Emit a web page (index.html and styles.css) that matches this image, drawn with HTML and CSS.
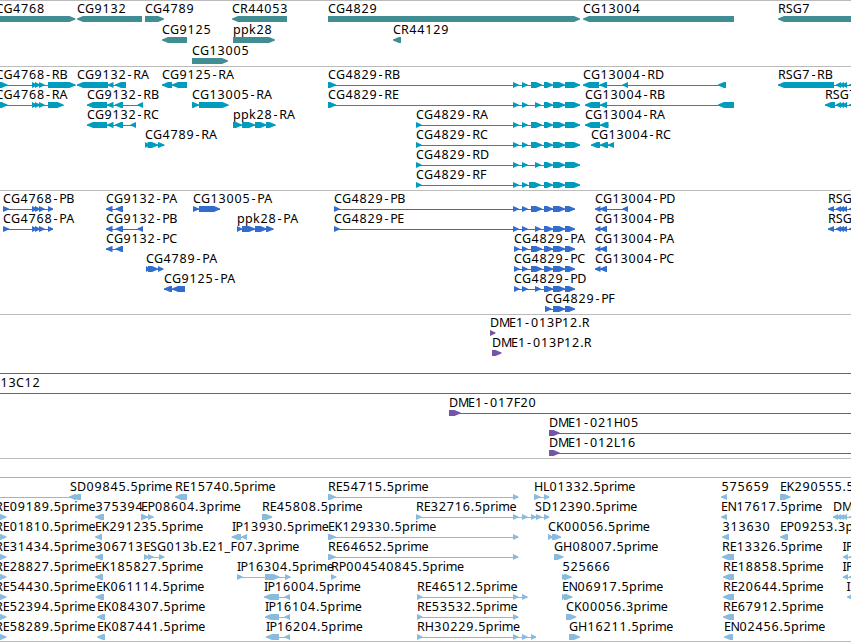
FILE: index.html
```html
<!DOCTYPE html>
<html lang="en">
<head>
<meta charset="utf-8">
<title>Genome tracks</title>
<link rel="stylesheet" href="styles.css">
</head>
<body>
<main class="browser">
  <section class="track track-gene"><svg class="lane" id="genes"></svg></section>
  <section class="track track-transcript"><svg class="lane" id="transcripts"></svg></section>
  <section class="track track-protein"><svg class="lane" id="proteins"></svg></section>
  <section class="track track-clone"><svg class="lane" id="clones"></svg></section>
  <section class="track track-est"><svg class="lane" id="ests"></svg></section>
</main>
<script src="tracks.js"></script>
</body>
</html>
```
FILE: styles.css
```css
body {
  margin: 0;
  background: #fff;
  overflow: hidden;
}

.browser {
  display: flex;
  flex-direction: column;
  width: 851px;
  border-bottom: 1px solid #bbb;
}

.track {
  border-top: 1px solid #bbb;
}

.lane {
  display: block;
  width: 100%;
  height: 100%;
  overflow: hidden;
  fill: currentColor;
}

.track-gene { height: 65px; color: #408e94; }
.track-transcript { height: 123px; color: #009cbe; }
.track-protein { height: 123px; color: #326ccc; }
.track-clone { height: 143px; color: #7455a6; }
.track-est { height: 182px; color: #88bbdd; }

.label {
  font-family: "Noto Sans", "DejaVu Sans", sans-serif;
  font-size: 12.5px;
  fill: #000;
}
```
FILE: tracks.js
```js
// Each feature: [row, label, x, strand, exons, optional line start, optional line end]
const G = [
  [0, 'CG4768', -4.5, 1, [[-10, 75.5]]],
  [0, 'CG9132', 77, -1, [[77, 142]]],
  [0, 'CG4789', 145, 1, [[145, 164]]],
  [0, 'CR44053', 232, -1, [[232, 287]]],
  [0, 'CG4829', 328, 1, [[328, 580]]],
  [0, 'CG13004', 583, -1, [[583, 734]]],
  [0, 'RSG7', 778, -1, [[778, 870]]],
  [1, 'CG9125', 162, -1, [[162, 187]]],
  [1, 'ppk28', 233, 1, [[233, 275]]],
  [1, 'CR44129', 393, -1, [[393, 401]]],
  [2, 'CG13005', 192, 1, [[192, 228]]]
];

const tri = [[32, 37], [35, 40], [39, 44.5]];
const a = [513, 518.7], b = [522, 527.7], c = [531, 542], c2 = [535, 540.7];
const d = [544, 553], e = [553, 565], f = [565, 580], fp = [565, 575];
const rsg = [[836, 841], [839, 844], [842, 847], [849, 856]];
const ppk = [[242, 255], [255, 266.5]];

const T = [
  [0, 'CG4768-RB', -4.5, 1, [[-5, 7.5], ...tri, [48, 75.5]]],
  [1, 'CG4768-RA', -4.5, 1, [[-5, 7.5], ...tri, [48, 63.5]]],
  [0, 'CG9132-RA', 77, -1, [[77, 108], [107.5, 113.5], [115, 126]]],
  [1, 'CG9132-RB', 87, -1, [[87, 107], [107, 113.5], [115, 123], [137.5, 143]]],
  [2, 'CG9132-RC', 87, -1, [[87, 107], [107, 113.5], [115, 123], [130.5, 136]]],
  [3, 'CG4789-RA', 145, 1, [[145, 149], [147.5, 158], [158, 164.3]]],
  [0, 'CG9125-RA', 162, -1, [[162, 172], [172, 187]]],
  [1, 'CG13005-RA', 192, 1, [[192, 199], [199, 228.5]]],
  [2, 'ppk28-RA', 233, 1, [[233, 242], ...ppk, [266, 275.5]]],
  [0, 'CG4829-RB', 328, 1, [[328, 336], a, b, c, d, e, f]],
  [1, 'CG4829-RE', 328, 1, [[328, 336], a, b, c2, d, e, f]],
  [2, 'CG4829-RA', 416, 1, [[416, 421.5], a, b, c, d, e, f]],
  [3, 'CG4829-RC', 416, 1, [[416, 421.5], a, b, c, d, e, f]],
  [4, 'CG4829-RD', 416, 1, [[416, 421.5], a, b, c2, d, e, f]],
  [5, 'CG4829-RF', 416, 1, [[416, 421.5], a, b, [529, 540.7], d, e, f]],
  [0, 'CG13004-RD', 583, -1, [[583, 599], [599.5, 607], [622.5, 628], [718, 726]]],
  [1, 'CG13004-RB', 585, -1, [[585, 600], [600, 607], [718, 734]]],
  [2, 'CG13004-RA', 585, -1, [[585, 600], [600, 608.5]]],
  [3, 'CG13004-RC', 591, -1, [[591, 600], [600, 608], [608, 614]]],
  [0, 'RSG7-RB', 778, -1, [[778, 834], ...rsg]],
  [1, 'RSG7', 825, -1, [[825, 835], ...rsg]]
];

const P = [
  [0, 'CG4768-PB', 3, 1, [[3, 9], ...tri, [48, 53]]],
  [1, 'CG4768-PA', 3, 1, [[3, 9], ...tri, [48, 53]]],
  [0, 'CG9132-PA', 106, -1, [[106, 112.5], [115.5, 123]]],
  [1, 'CG9132-PB', 106, -1, [[106, 112.5], [115.5, 123], [137.5, 143]]],
  [2, 'CG9132-PC', 106, -1, [[106, 112.5], [115.5, 123]]],
  [3, 'CG4789-PA', 146, 1, [[146, 150], [148, 158], [158, 163.3]]],
  [4, 'CG9125-PA', 164, -1, [[164, 172], [172, 185]]],
  [0, 'CG13005-PA', 193, 1, [[193, 199], [199, 220]]],
  [1, 'ppk28-PA', 237, 1, [[237, 242], ...ppk, [266, 273.5]]],
  [0, 'CG4829-PB', 334, 1, [[334, 339.7], a, b, c, d, e, fp]],
  [1, 'CG4829-PE', 334, 1, [[334, 339.7], a, b, c2, d, e, fp]],
  [2, 'CG4829-PA', 514, 1, [[514, 519.5], b, c, d, e, fp]],
  [3, 'CG4829-PC', 514, 1, [[514, 519.5], b, c, d, e, fp]],
  [4, 'CG4829-PD', 514, 1, [[514, 519.5], b, c2, d, e, fp]],
  [5, 'CG4829-PF', 545, 1, [[545, 551.5], e, fp]],
  [0, 'CG13004-PD', 595, -1, [[595, 600.5], [600, 607], [622.5, 628]]],
  [1, 'CG13004-PB', 595, -1, [[595, 600.5], [600, 607]]],
  [2, 'CG13004-PA', 595, -1, [[595, 600.5], [600, 607]]],
  [3, 'CG13004-PC', 595, -1, [[595, 600.5], [600, 607]]],
  [0, 'RSG', 828, -1, [[828, 834], ...rsg]],
  [1, 'RSG', 828, -1, [[828, 834], ...rsg]]
];

const C = [
  [0, 'DME1-013P12.R', 490, 1, [[490, 495.5]]],
  [1, 'DME1-013P12.R', 492, 1, [[492, 501.5]]],
  [2, '', 0, 1, [], 0, 851],
  [3, '13C12', 0, 1, [], 0, 851],
  [4, 'DME1-017F20', 449, 1, [[449, 460.5]], 449, 851],
  [5, 'DME1-021H05', 549, 1, [[549, 559.5]], 549, 851],
  [6, 'DME1-012L16', 549, 1, [[549, 559.5]], 549, 851]
];

const L = [-5, 6.5], s = [328, 335.7], m = [513, 518.3], n = [522, 527.5];
const q = [[284.5, 290]];
const E = [
  [0, '', 0, 1, [], 0, 851],
  [1, 'SD09845.5prime', 70, -1, [[69, 76], [72, 81]], 0, 81],
  [1, 'RE15740.5prime', 175, -1, [[175, 187]]],
  [1, 'RE54715.5prime', 328, 1, [s, m]],
  [1, 'HL01332.5prime', 534, 1, [[534, 540.5], [544, 549.3]]],
  [1, '575659', 721, -1, [[721, 727]]],
  [1, 'EK290555.5prime', 780, 1, [[780, 790.5]]],
  [2, 'RE09189.5prime', -5, 1, [L]],
  [2, '375394', 95, -1, [[95, 104]]],
  [2, 'EP08604.3prime', 141, 1, [[141, 148], [148, 153.5]]],
  [2, 'RE45808.5prime', 262, 1, [[262, 272.3]]],
  [2, 'RE32716.5prime', 416, 1, [[416, 421.5], m, n, [531, 536]]],
  [2, 'SD12390.5prime', 535, 1, [[536, 541.5], [544, 549.3]], 531, 549],
  [2, 'EN17617.5prime', 721, -1, [[721, 727]]],
  [2, 'DM', 833, -1, [[833, 838], [836, 841], [839, 844], [842, 847], [849, 855]]],
  [3, 'RE01810.5prime', -5, 1, [L]],
  [3, 'EK291235.5prime', 95, -1, [[95, 102]]],
  [3, 'IP13930.5prime', 232, -1, [[231.7, 241], [241.3, 247]]],
  [3, 'EK129330.5prime', 328, 1, [s, m]],
  [3, 'CK00056.5prime', 548, 1, [[548, 553], [552, 561]]],
  [3, '313630', 722, -1, [[722, 729]]],
  [3, 'EP09253.3prime', 780, -1, [[780, 788]]],
  [4, 'RE31434.5prime', -5, 1, [L]],
  [4, '306713', 95, -1, [[95, 103]]],
  [4, 'ESG013b.E21_F07.3prime', 143.5, 1, [[144, 149], [148, 153.5], [159, 164.3]]],
  [4, 'RE64652.5prime', 328, 1, [s, m]],
  [4, 'GH08007.5prime', 554, 1, [[554, 563.5]]],
  [4, 'RE13326.5prime', 722, -1, [[722, 734]]],
  [4, 'IP', 842.5, -1, [[843, 848], [849, 855]]],
  [5, 'RE28827.5prime', -5, 1, [L]],
  [5, 'EK185827.5prime', 95, -1, [[95, 103]]],
  [5, 'IP16304.5prime', 237, 1, [[237, 242.7], [265, 279.5], [285, 290.5]]],
  [5, 'RP004540845.5prime', 331, 1, [[331, 336.5]]],
  [5, '525666', 562, 1, [[562, 567], [564, 571.5]]],
  [5, 'RE18858.5prime', 723, -1, [[723, 734]]],
  [5, 'IP', 842.5, -1, [[843, 848], [849, 855]]],
  [6, 'RE54430.5prime', -5, 1, [L]],
  [6, 'EK061114.5prime', 96, -1, [[95.5, 104]]],
  [6, 'IP16004.5prime', 264, -1, [[264, 279], ...q]],
  [6, 'RE46512.5prime', 417, 1, [[417, 422.5], m, n]],
  [6, 'EN06917.5prime', 562, 1, [[562, 567], [564, 572.3]]],
  [6, 'RE20644.5prime', 723, -1, [[723, 734]]],
  [6, 'I', 846.5, -1, [[847, 855]]],
  [7, 'RE52394.5prime', -5, 1, [L]],
  [7, 'EK084307.5prime', 97, -1, [[97, 105]]],
  [7, 'IP16104.5prime', 265, -1, [[265, 279], ...q]],
  [7, 'RE53532.5prime', 417, 1, [[417, 422.5], m]],
  [7, 'CK00056.3prime', 566, 1, [[566, 576.3]]],
  [7, 'RE67912.5prime', 723, -1, [[723, 734]]],
  [8, 'RE58289.5prime', -5, 1, [L]],
  [8, 'EK087441.5prime', 97, -1, [[97, 105]]],
  [8, 'IP16204.5prime', 266, -1, [[266, 279], ...q]],
  [8, 'RH30229.5prime', 417, 1, [[417, 422.5], m, n, [531, 536]]],
  [8, 'GH16211.5prime', 569, 1, [[569, 580]]],
  [8, 'EN02456.5prime', 724, -1, [[724, 733]]]
];

// Horizontal advance of each character; digits and others default to 8
const ADV = {
  G: 9, D: 9, M: 10, H: 9, N: 8.5, E: 6.5, F: 6.5, P: 7, B: 7, S: 7, L: 6,
  I: 3.5, R: 7.8, K: 7.5, '-': 7.2, '.': 4, _: 6, r: 5, i: 3, m: 11.3, e: 7, k: 7
};
// Centres narrow glyphs in their cell
const SHIFT = { '-': 1.6, '.': 0.5 };

function el(parent, name, attrs) {
  const node = document.createElementNS('http://www.w3.org/2000/svg', name);
  for (const key in attrs) node.setAttribute(key, attrs[key]);
  parent.appendChild(node);
  return node;
}

function draw(id, features, pitch) {
  const svg = document.getElementById(id);
  for (const [row, label, x, strand, exons, from, to] of features) {
    const y = 15 + row * pitch;
    if (exons.length > 1 || from !== undefined) {
      const x1 = from !== undefined ? from : exons[0][0];
      const x2 = to !== undefined ? to : exons[exons.length - 1][1];
      el(svg, 'rect', { x: x1, y: y + 3, width: x2 - x1, height: 1 });
    }
    for (const [l, r] of exons) {
      const h = Math.min(6, r - l);
      const pts = strand > 0
        ? [[l, y], [r - h, y], [r, y + 2.5], [r, y + 3.5], [r - h, y + 6], [l, y + 6]]
        : [[r, y], [l + h, y], [l, y + 2.5], [l, y + 3.5], [l + h, y + 6], [r, y + 6]];
      el(svg, 'polygon', { points: pts.map(p => p.join(',')).join(' ') });
    }
  }
  for (const [row, label, x] of features) {
    if (!label) continue;
    let pos = x;
    const xs = [...label].map(ch => {
      const at = pos + (SHIFT[ch] || 0) + (/\d/.test(ch) ? 0.4 : 0);
      pos += ADV[ch] || 8;
      return at;
    });
    el(svg, 'text', { class: 'label', x: xs.join(' '), y: 12 + row * pitch }).textContent = label;
  }
}

draw('genes', G, 21);
draw('transcripts', T, 20);
draw('proteins', P, 20);
draw('clones', C, 20);
draw('ests', E, 20);
```
